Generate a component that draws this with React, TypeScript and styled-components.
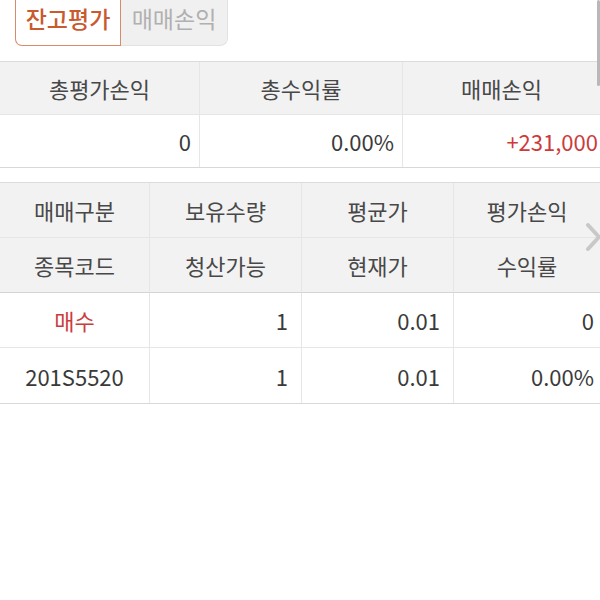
import * as React from 'react'
import styled, { createGlobalStyle } from 'styled-components'

const GlobalStyle = createGlobalStyle`
  html, body {
    margin: 0;
    padding: 0;
    background: #fff;
    overflow: hidden;
  }
  body {
    font-family: 'Noto Sans CJK KR', 'Noto Sans', sans-serif;
    color: #444;
  }
`

const Page = styled.div`
  position: relative;
  width: 600px;
  height: 600px;
  overflow: hidden;
`

const Tabs = styled.div`
  display: flex;
  padding-left: 15px;
`

const Tab = styled.div<{ $active?: boolean }>`
  width: 106px;
  height: 46px;
  box-sizing: border-box;
  padding-bottom: 9px;
  display: flex;
  align-items: center;
  justify-content: center;
  font-size: 23px;
  font-weight: ${(p) => (p.$active ? 500 : 400)};
  color: ${(p) => (p.$active ? '#c9592f' : '#b0b0b0')};
  background: ${(p) => (p.$active ? '#fff' : '#f0f0f0')};
  border: 1px solid ${(p) => (p.$active ? '#d98a68' : '#e2e2e2')};
  border-top: none;
  border-radius: ${(p) => (p.$active ? '0 0 0 7px' : '0 0 8px 0')};
  ${(p) => (p.$active ? '' : 'border-left: none; width: 107px;')}
`

const Grid = styled.div<{ $cols: string; $top: number }>`
  display: grid;
  grid-template-columns: ${(p) => p.$cols};
  margin-top: ${(p) => p.$top}px;
  border-top: 1px solid #dcdcdc;
  border-bottom: 1px solid #d8d8d8;
`

const Cell = styled.div<{
  $head?: boolean
  $align?: 'center' | 'right'
  $color?: string
  $pr?: number
  $h: number
  $strong?: boolean
}>`
  height: ${(p) => p.$h}px;
  box-sizing: border-box;
  display: flex;
  align-items: center;
  justify-content: ${(p) => (p.$align === 'right' ? 'flex-end' : 'center')};
  padding-right: ${(p) => (p.$align === 'right' ? p.$pr ?? 12 : 0)}px;
  font-size: 22px;
  color: ${(p) => p.$color ?? (p.$head ? '#484848' : '#3a3a3a')};
  background: ${(p) => (p.$head ? '#f2f2f2' : '#fff')};
  border-right: 1px solid #e6e6e6;
  border-bottom: 1px solid ${(p) => (p.$strong ? '#d4d4d4' : '#e6e6e6')};
  white-space: nowrap;
  &:nth-child(4n) {
    border-right: none;
  }
`

const SummaryCell = styled(Cell)`
  &:nth-child(4n) {
    border-right: 1px solid #e6e6e6;
  }
  &:nth-child(3n) {
    border-right: none;
  }
  &:nth-child(n + 4) {
    border-bottom: none;
  }
`

const LastRow = styled(Cell)`
  border-bottom: none;
`

const Chevron = styled.svg`
  position: absolute;
  right: -4px;
  top: 222px;
`

const ScrollThumb = styled.div`
  position: absolute;
  right: 0;
  top: 0;
  width: 3px;
  height: 86px;
  background: #b8b8b8;
  border-radius: 2px;
`

const RED = '#cc3b3b'

export default function App() {
  return (
    <Page>
      <GlobalStyle />
      <Tabs>
        <Tab $active>잔고평가</Tab>
        <Tab>매매손익</Tab>
      </Tabs>

      <Grid $cols="200px 203px 197px" $top={15}>
        <SummaryCell $head $h={53}>총평가손익</SummaryCell>
        <SummaryCell $head $h={53}>총수익률</SummaryCell>
        <SummaryCell $head $h={53}>매매손익</SummaryCell>
        <SummaryCell $align="right" $pr={8} $h={52}>0</SummaryCell>
        <SummaryCell $align="right" $pr={8} $h={52}>0.00%</SummaryCell>
        <SummaryCell $align="right" $pr={2} $h={52} $color={RED}>+231,000</SummaryCell>
      </Grid>

      <Grid $cols="150px 152px 152px 146px" $top={14}>
        <Cell $head $h={55}>매매구분</Cell>
        <Cell $head $h={55}>보유수량</Cell>
        <Cell $head $h={55}>평균가</Cell>
        <Cell $head $h={55}>평가손익</Cell>
        <Cell $head $h={55} $strong>종목코드</Cell>
        <Cell $head $h={55} $strong>청산가능</Cell>
        <Cell $head $h={55} $strong>현재가</Cell>
        <Cell $head $h={55} $strong>수익률</Cell>
        <Cell $h={55} $color={RED}>매수</Cell>
        <Cell $align="right" $pr={13} $h={55}>1</Cell>
        <Cell $align="right" $pr={13} $h={55}>0.01</Cell>
        <Cell $align="right" $pr={6} $h={55}>0</Cell>
        <LastRow $h={55}>201S5520</LastRow>
        <LastRow $align="right" $pr={13} $h={55}>1</LastRow>
        <LastRow $align="right" $pr={13} $h={55}>0.01</LastRow>
        <LastRow $align="right" $pr={6} $h={55}>0.00%</LastRow>
      </Grid>

      <Chevron width="20" height="30" viewBox="0 0 20 30">
        <polyline
          points="4,3 15,15 4,27"
          fill="none"
          stroke="#c8c8c8"
          strokeWidth="4"
          strokeLinecap="round"
          strokeLinejoin="round"
        />
      </Chevron>
      <ScrollThumb />
    </Page>
  )
}
